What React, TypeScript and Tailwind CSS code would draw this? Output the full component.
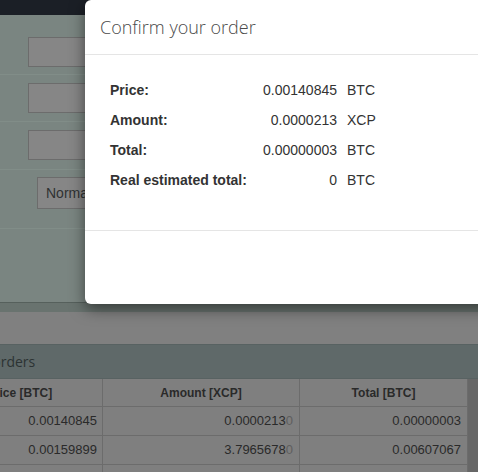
import React from "react";

const rows = [
  ["0.00140845", "0.0000213", "0.00000003"],
  ["0.00159899", "3.7965678", "0.00607067"],
];

export default function App() {
  const sans = { fontFamily: '"Liberation Sans", Arial, sans-serif' };
  return (
    <div className="relative w-[478px] h-[472px] overflow-hidden bg-[#7f7f7f]" style={sans}>
      {/* page behind backdrop */}
      <div className="h-[15px] bg-[#1b1f26]" />
      <div className="bg-[#7a8581]">
        <div className="h-[60px] pt-[22px] pl-[28px] border-b border-[#818d88]">
          <div className="h-[30px] w-[300px] bg-[#868686] border border-[#6c6c6c]" />
        </div>
        <div className="h-[47px] pt-[8px] pl-[28px] border-b border-[#818d88]">
          <div className="h-[30px] w-[300px] bg-[#868686] border border-[#6c6c6c]" />
        </div>
        <div className="h-[48px] pt-[8px] pl-[28px] border-b border-[#818d88]">
          <div className="h-[30px] w-[300px] bg-[#868686] border border-[#6c6c6c]" />
        </div>
        <div className="h-[59px] pt-[7px] pl-[37px] border-b border-[#818d88]">
          <div className="h-[32px] w-[300px] bg-[#868686] border border-[#6c6c6c] flex items-center pl-[8px] text-[14px] text-[#2f3232]">
            Normal
          </div>
        </div>
        <div className="h-[73px]" />
      </div>
      <div className="h-[10px] bg-[#69736f] border-t border-[#56605c]" />
      <div className="h-[32px] bg-[#808080]" />
      <div className="h-[35px] bg-[#5f6969] border-y border-[#586262] flex items-center">
        <span className="-ml-[34px] text-[14px] text-[#2c3333]" style={{ fontFamily: '"Open Sans", sans-serif' }}>
          Sell orders
        </span>
      </div>
      <div className="flex">
        <div className="-ml-[63px] flex-none">
          <div className="grid grid-cols-[166px_197px_168px] text-[#2a2a2a]">
            <div className="h-[28px] border-r border-b border-[#6c6c6c] flex items-center justify-center text-[12px] font-bold">Price [BTC]</div>
            <div className="h-[28px] border-r border-b border-[#6c6c6c] flex items-center justify-center text-[12px] font-bold">Amount [XCP]</div>
            <div className="h-[28px] border-r border-b border-[#6c6c6c] flex items-center justify-center text-[12px] font-bold">Total [BTC]</div>
            {rows.map((r, i) => (
              <React.Fragment key={i}>
                <div className="h-[29px] border-r border-b border-[#6c6c6c] flex items-center justify-end pr-[5px] text-[13px]">{r[0]}</div>
                <div className="h-[29px] border-r border-b border-[#6c6c6c] flex items-center justify-end pr-[6px] text-[13px]">
                  {r[1]}
                  <span className="text-[#5e5e5e]">0</span>
                </div>
                <div className="h-[29px] border-r border-b border-[#6c6c6c] flex items-center justify-end pr-[6px] text-[13px]">{r[2]}</div>
              </React.Fragment>
            ))}
            <div className="h-[29px] border-r border-[#6c6c6c]" />
            <div className="h-[29px] border-r border-[#6c6c6c]" />
            <div className="h-[29px] border-r border-[#6c6c6c]" />
          </div>
        </div>
        <div className="flex-1 bg-[#676767] h-[100px]" />
      </div>

      {/* modal */}
      <div className="absolute left-[85px] top-0 w-[420px] h-[304px] bg-white rounded-[6px] shadow-[0_5px_15px_rgba(0,0,0,0.5)] flex flex-col">
        <div className="h-[55px] border-b border-[#e5e5e5] flex items-center px-[15px]">
          <h4 className="text-[18px] font-light text-[#4a4a4a]" style={{ fontFamily: '"Open Sans", sans-serif' }}>
            Confirm your order
          </h4>
        </div>
        <div className="h-[175px] pt-[20px] pl-[25px] text-[14px] text-[#333]">
          <div className="grid grid-cols-[150px_77px_auto] auto-rows-[30px] items-center">
            <div className="font-bold">Price:</div>
            <div className="text-right">0.00140845</div>
            <div className="pl-[10px]">BTC</div>
            <div className="font-bold">Amount:</div>
            <div className="text-right">0.0000213</div>
            <div className="pl-[10px]">XCP</div>
            <div className="font-bold">Total:</div>
            <div className="text-right">0.00000003</div>
            <div className="pl-[10px]">BTC</div>
            <div className="font-bold">Real estimated total:</div>
            <div className="text-right">0</div>
            <div className="pl-[10px]">BTC</div>
          </div>
        </div>
        <div className="flex-1 border-t border-[#e5e5e5]" />
      </div>
    </div>
  );
}
